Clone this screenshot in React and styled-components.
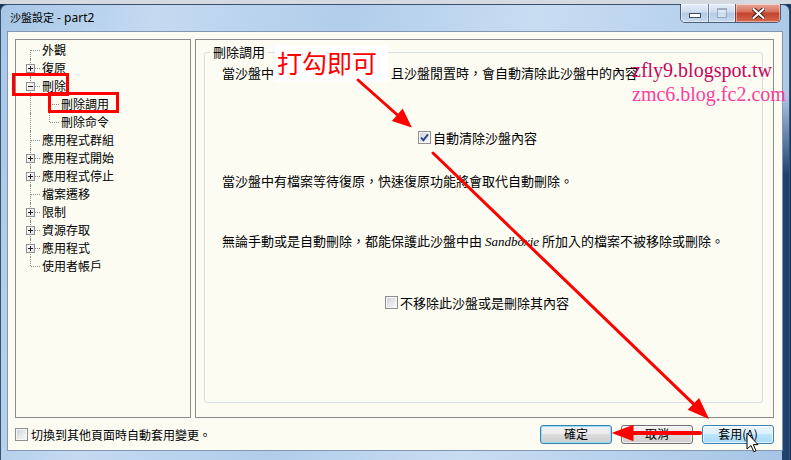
import React from "react"
import styled, { createGlobalStyle, css } from "styled-components"

const CJK = `"Noto Sans CJK TC", "Noto Sans", sans-serif`
const CREAM = "#fcfcf3"

const GlobalStyle = createGlobalStyle`
  html, body {
    margin: 0;
    padding: 0;
  }
  body {
    width: 791px;
    height: 460px;
    overflow: hidden;
    font-family: ${CJK};
    background: #1b365c;
  }
`

const Desktop = styled.div`
  position: relative;
  width: 791px;
  height: 460px;
  overflow: hidden;
  background: linear-gradient(to bottom, #d5dae1 0 4px, #1b365c 4px);
`

const Window = styled.div`
  margin-top: 4px;
  width: 790px;
  height: 456px;
  box-sizing: border-box;
  border: 1px solid #3a506e;
  border-bottom: none;
  border-radius: 7px 7px 0 0;
  padding: 0 6px 9px 6px;
  display: flex;
  flex-direction: column;
  background:
    linear-gradient(to bottom, rgba(31, 66, 112, 0) 90px, #1f4270 170px) right top / 7px 100% no-repeat,
    linear-gradient(100deg, #a8c7e7 0%, #c4daf1 18%, #b1cdea 40%, #c8ddf2 62%, #b6d0ec 82%, #a5c4e5 100%);
`

const TitleBar = styled.div`
  height: 26px;
  flex: none;
  display: flex;
  align-items: center;
  justify-content: space-between;
  padding-left: 3px;
`

const Title = styled.span`
  font-size: 11px;
  line-height: 14px;
  color: #000;
  margin-top: -1px;
  white-space: nowrap;
`

const TitleLatin = styled.span`
  font-family: "Noto Sans", sans-serif;
  font-size: 12px;
`

const Caption = styled.div`
  align-self: flex-start;
  margin-top: -1px;
  margin-right: 2px;
  display: flex;
  height: 18px;
  border: 1px solid rgba(40, 55, 80, 0.75);
  border-top: none;
  border-radius: 0 0 5px 5px;
  overflow: hidden;
`

const CapBtn = styled.span`
  width: ${p => p.$w}px;
  display: flex;
  align-items: center;
  justify-content: center;
  box-shadow: inset 0 0 0 1px rgba(255, 255, 255, 0.45);
  background: linear-gradient(#e6eff9 0%, #cddcef 45%, #b3cae4 50%, #c7daef 100%);
  & + & {
    border-left: 1px solid rgba(40, 55, 80, 0.6);
  }
  ${p => p.$close && css`
    background: linear-gradient(#e8a898 0%, #d86f5b 45%, #c3412c 50%, #d56a4e 100%);
  `}
`

const MinGlyph = styled.span`
  width: 10px;
  height: 3px;
  margin-top: 5px;
  background: #fff;
  border: 1px solid #3d4d63;
`

const MaxGlyph = styled.span`
  width: 8px;
  height: 7px;
  border: 1px solid rgba(90, 110, 140, 0.5);
  border-top-width: 2px;
  background: rgba(255, 255, 255, 0.35);
`

const Client = styled.div`
  flex: 1;
  border: 1px solid #8397b0;
  background: ${CREAM};
  padding: 7px 8px 0 7px;
  display: flex;
  flex-direction: column;
`

const Panels = styled.div`
  height: 379px;
  display: flex;
  gap: 4px;
`

const Tree = styled.div`
  width: 176px;
  box-sizing: border-box;
  border: 1px solid #8c8c8c;
  background: ${CREAM};
  padding-top: 1px;
`

const TreeRow = styled.div`
  display: flex;
  height: 18px;
  padding-left: 6px;
`

const LINE = "#8f8f8f"

const Guide = styled.span`
  position: relative;
  flex: 0 0 19px;
  &::before {
    content: "";
    position: absolute;
    left: 8px;
    top: ${p => (p.$first ? "9px" : "0")};
    bottom: ${p => (p.$last ? "9px" : "0")};
    border-left: 1px dotted ${LINE};
  }
  ${p => p.$branch && css`
    &::after {
      content: "";
      position: absolute;
      left: 9px;
      right: 1px;
      top: 9px;
      border-top: 1px dotted ${LINE};
    }
  `}
`

const Expander = styled.span`
  position: absolute;
  left: 4px;
  top: 5px;
  width: 9px;
  height: 9px;
  box-sizing: border-box;
  border: 1px solid #919191;
  background: linear-gradient(135deg, #ffffff, #e2e2e2);
  z-index: 1;
  &::before {
    content: "";
    position: absolute;
    left: 1px;
    top: 3px;
    width: 5px;
    height: 1px;
    background: #1e1e1e;
  }
  ${p => p.$plus && css`
    &::after {
      content: "";
      position: absolute;
      left: 3px;
      top: 1px;
      width: 1px;
      height: 5px;
      background: #1e1e1e;
    }
  `}
`

const Node = styled.span`
  margin-left: 1px;
  font-size: 12px;
  line-height: 18px;
  color: #000;
  white-space: nowrap;
`

const Page = styled.div`
  flex: 1;
  display: flex;
  border: 1px solid #8c8c8c;
  padding: 5px 10px 14px 8px;
`

const Group = styled.fieldset`
  flex: 1;
  margin: 0;
  padding: 0;
  min-width: 0;
  border: 1px solid #d5dfe5;
  border-radius: 3px;
`

const Legend = styled.legend`
  margin-left: 5px;
  padding: 0 3px;
  font-size: 13px;
  line-height: 14px;
  color: #000;
`

const GroupBody = styled.div`
  display: flex;
  flex-direction: column;
  padding: 6px 0 0 17px;
`

const Para = styled.div`
  margin-top: ${p => p.$gap || 0}px;
  font-size: 13px;
  line-height: 15px;
  color: #000;
  white-space: nowrap;
`

// the part of the sentence hidden under the pasted note
const Hidden = styled.span`
  display: inline-block;
  width: 117px;
`

const Latin = styled.span`
  font-family: "Liberation Serif", serif;
  font-style: italic;
`

const CheckRow = styled.label`
  display: flex;
  align-items: center;
  gap: ${p => p.$space || 2}px;
  margin-top: ${p => p.$gap || 0}px;
  margin-left: ${p => p.$indent || 0}px;
  font-size: ${p => p.$size || 13}px;
  line-height: 15px;
  color: #000;
  white-space: nowrap;
`

const Box = styled.span`
  flex: none;
  width: 13px;
  height: 13px;
  box-sizing: border-box;
  border: 1px solid #8e8f8f;
  box-shadow: inset 0 0 0 1px #f6f6f6;
  background: linear-gradient(135deg, #c9ccd1 0%, #e6e7e9 50%, #fbfbfb 100%);
  display: flex;
  align-items: center;
  justify-content: center;
`

const Footer = styled.div`
  flex: 1;
  display: flex;
  align-items: center;
  justify-content: space-between;
`

const Buttons = styled.div`
  display: flex;
  gap: 9px;
`

const Btn = styled.button`
  width: 72px;
  height: 19px;
  padding: 0;
  box-sizing: border-box;
  font-family: ${CJK};
  font-size: 12px;
  line-height: 1;
  color: #000;
  border: 1px solid #707070;
  border-radius: 3px;
  background: linear-gradient(#f2f2f2 0%, #ebebeb 49%, #dcdcdc 50%, #cfcfcf 100%);
  box-shadow: inset 0 0 0 1px rgba(255, 255, 255, 0.7);
  ${p => p.$default && css`
    border-color: #3c7fb1;
    box-shadow: inset 0 0 0 1px #8fe0fb;
  `}
  ${p => p.$hover && css`
    border-color: #3c7fb1;
    background: linear-gradient(#eaf6fd 0%, #d9f0fc 49%, #bee6fd 50%, #a7d9f5 100%);
  `}
`

/* annotations laid over the dialog */

const Overlay = styled.div`
  position: absolute;
  inset: 0;
  pointer-events: none;
`

const RedBox = styled.div`
  position: absolute;
  left: ${p => p.$x}px;
  top: ${p => p.$y}px;
  width: ${p => p.$w}px;
  height: ${p => p.$h}px;
  box-sizing: border-box;
  border: 3px solid #f00;
`

const Note = styled.div`
  position: absolute;
  left: 275px;
  top: 45px;
  width: 113px;
  height: 37px;
  box-sizing: border-box;
  padding: 5px 0 0 2px;
  background: #fff;
  color: #f00;
  font-size: 25px;
  line-height: 25px;
  white-space: nowrap;
`

const Watermark = styled.div`
  position: absolute;
  left: 632px;
  top: ${p => p.$y}px;
  font-family: "Liberation Serif", serif;
  font-size: 20px;
  line-height: 23px;
  color: ${p => p.$color};
  white-space: nowrap;
`

const Drawing = styled.svg`
  position: absolute;
  left: 0;
  top: 0;
`

const tree = [
  { label: "外觀", first: true },
  { label: "復原", toggle: "plus" },
  { label: "刪除", toggle: "minus" },
  { label: "刪除調用", child: true },
  { label: "刪除命令", child: true, last: true },
  { label: "應用程式群組" },
  { label: "應用程式開始", toggle: "plus" },
  { label: "應用程式停止", toggle: "plus" },
  { label: "檔案遷移" },
  { label: "限制", toggle: "plus" },
  { label: "資源存取", toggle: "plus" },
  { label: "應用程式", toggle: "plus" },
  { label: "使用者帳戶", last: true },
]

const CheckMark = () => (
  <svg width="9" height="9" viewBox="0 0 9 9">
    <path d="M1 4.6 L3.4 7.2 L8 1.4" fill="none" stroke="#2a4690" strokeWidth="1.9" />
  </svg>
)

const Check = ({ checked }) => <Box>{checked && <CheckMark />}</Box>

const TreeView = () => (
  <Tree>
    {tree.map(item => (
      <TreeRow key={item.label}>
        {item.child ? (
          <>
            <Guide />
            <Guide $branch $last={item.last} />
          </>
        ) : (
          <Guide $branch $first={item.first} $last={item.last}>
            {item.toggle && <Expander $plus={item.toggle === "plus"} />}
          </Guide>
        )}
        <Node>{item.label}</Node>
      </TreeRow>
    ))}
  </Tree>
)

const Arrows = () => (
  <Drawing width="791" height="460" viewBox="0 0 791 460">
    <g stroke="#f00" strokeWidth="3" strokeLinecap="round" fill="#f00">
      <line x1="358" y1="80" x2="398" y2="115.5" />
      <polygon points="409,125 394.5,120.3 402.3,111.3" />
      <line x1="433" y1="153" x2="694.5" y2="404.9" />
      <polygon points="706,416 690.3,409.2 698.7,400.6" />
      <line x1="700" y1="433" x2="630" y2="433" strokeWidth="4" />
      <polygon points="616,433 632,427 632,439" />
    </g>
    <path
      d="M747 433 L747 449 L751 445.5 L753.8 451.8 L756 450.8 L753.3 444.6 L758 444.6 Z"
      fill="#fff"
      stroke="#000"
      strokeWidth="1"
      strokeLinejoin="round"
    />
  </Drawing>
)

export default function App() {
  return (
    <>
      <GlobalStyle />
      <Desktop>
        <Window>
          <TitleBar>
            <Title>
              沙盤設定<TitleLatin> - part2</TitleLatin>
            </Title>
            <Caption>
              <CapBtn $w={27}>
                <MinGlyph />
              </CapBtn>
              <CapBtn $w={26}>
                <MaxGlyph />
              </CapBtn>
              <CapBtn $w={44} $close>
                <svg width="13" height="11" viewBox="0 0 13 11">
                  <path
                    d="M1.5 1 L11.5 10 M11.5 1 L1.5 10"
                    stroke="#3b1a14"
                    strokeWidth="4"
                    strokeLinecap="round"
                  />
                  <path
                    d="M1.5 1 L11.5 10 M11.5 1 L1.5 10"
                    stroke="#fff"
                    strokeWidth="2.2"
                    strokeLinecap="round"
                  />
                </svg>
              </CapBtn>
            </Caption>
          </TitleBar>
          <Client>
            <Panels>
              <TreeView />
              <Page>
                <Group>
                  <Legend>刪除調用</Legend>
                  <GroupBody>
                    <Para>
                      當沙盤中<Hidden />且沙盤閒置時，會自動清除此沙盤中的內容
                    </Para>
                    <CheckRow $gap={50} $indent={196}>
                      <Check checked />
                      自動清除沙盤內容
                    </CheckRow>
                    <Para $gap={28}>當沙盤中有檔案等待復原，快速復原功能將會取代自動刪除。</Para>
                    <Para $gap={45}>
                      無論手動或是自動刪除，都能保護此沙盤中由 <Latin>Sandboxie</Latin> 所加入的檔案不被移除或刪除。
                    </Para>
                    <CheckRow $gap={46} $indent={163}>
                      <Check />
                      不移除此沙盤或是刪除其內容
                    </CheckRow>
                  </GroupBody>
                </Group>
              </Page>
            </Panels>
            <Footer>
              <CheckRow $size={12} $space={3}>
                <Check />
                切換到其他頁面時自動套用變更。
              </CheckRow>
              <Buttons>
                <Btn $default>確定</Btn>
                <Btn>取消</Btn>
                <Btn $hover>套用(A)</Btn>
              </Buttons>
            </Footer>
          </Client>
        </Window>
        <Overlay>
          <RedBox $x={12} $y={73} $w={57} $h={23} />
          <RedBox $x={48} $y={92} $w={71} $h={21} />
          <Note>打勾即可</Note>
          <Watermark $y={59} $color="#c8045e">zfly9.blogspot.tw</Watermark>
          <Watermark $y={83} $color="#ff3d9e">zmc6.blog.fc2.com</Watermark>
          <Arrows />
        </Overlay>
      </Desktop>
    </>
  )
}
